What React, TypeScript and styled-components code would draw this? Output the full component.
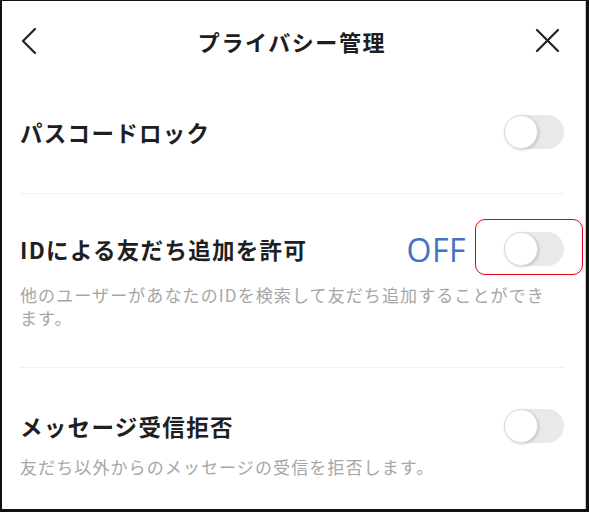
import styled, { createGlobalStyle } from 'styled-components'

const GlobalStyle = createGlobalStyle`
  html, body {
    margin: 0;
    padding: 0;
    background: #ffffff;
  }
  body {
    font-family: "Noto Sans CJK JP", "Noto Sans", sans-serif;
  }
`

const Frame = styled.div`
  box-sizing: border-box;
  width: 589px;
  height: 512px;
  border-style: solid;
  border-color: #111;
  border-width: 1px 3px 3px 2px;
  background: #fff;
  overflow: hidden;
`

const Screen = styled.div`
  box-sizing: border-box;
  height: 100%;
  border-right: 1px solid #c8c8c8;
  padding: 0 21px 0 18px;
  display: flex;
  flex-direction: column;
`

const Header = styled.header`
  height: 79px;
  display: flex;
  align-items: center;
  justify-content: space-between;
`

const IconButton = styled.button<{ $align: 'start' | 'end' }>`
  border: none;
  background: none;
  padding: 0;
  width: 34px;
  height: 28px;
  display: flex;
  align-items: center;
  justify-content: ${p => (p.$align === 'start' ? 'flex-start' : 'center')};
  color: #222;
`

const Title = styled.h1`
  margin: 0;
  font-size: 22px;
  font-weight: 700;
  color: #1e1e1e;
  letter-spacing: 1.6px;
`

const Section = styled.section<{ $top: number; $bottom: number; $divider?: boolean }>`
  padding: ${p => p.$top}px 0 ${p => p.$bottom}px;
  border-bottom: ${p => (p.$divider ? '1px solid #f1f1f1' : 'none')};
`

const Row = styled.div`
  height: 40px;
  display: flex;
  align-items: center;
`

const Label = styled.span`
  flex: 1;
  font-size: 22.5px;
  font-weight: 700;
  color: #1f1f1f;
  letter-spacing: 1.3px;
`

const Desc = styled.p<{ $gap: number }>`
  margin: ${p => p.$gap}px 0 0;
  font-size: 17px;
  line-height: 23px;
  color: #a6a6a6;
  letter-spacing: 1.1px;
  padding-right: 10px;
`

const Note = styled.span`
  font-family: "Open Sans", "Liberation Sans", sans-serif;
  font-size: 32px;
  color: #4472c4;
  margin-right: 38px;
  letter-spacing: 0.5px;
`

const ToggleWrap = styled.div`
  position: relative;
  display: flex;
`

const Highlight = styled.div`
  position: absolute;
  left: -29px;
  right: -19px;
  top: -13px;
  bottom: -9px;
  border: 1.5px solid #e60012;
  border-radius: 10px;
`

const Track = styled.div`
  position: relative;
  width: 60px;
  height: 34px;
  border-radius: 17px;
  background: #e9e9e9;
`

const Knob = styled.div`
  position: absolute;
  left: 0;
  top: 0;
  width: 34px;
  height: 34px;
  border-radius: 50%;
  background: #fff;
  box-sizing: border-box;
  border: 1px solid #dcdcdc;
  box-shadow: 1px 1px 3px rgba(0, 0, 0, 0.18);
`

const Toggle = () => (
  <Track>
    <Knob />
  </Track>
)

export default function App() {
  return (
    <>
      <GlobalStyle />
      <Frame>
        <Screen>
          <Header>
            <IconButton $align="start" aria-label="back">
              <svg width="18" height="28" viewBox="0 0 18 28" fill="none">
                <path d="M15 2 L3 14 L15 26" stroke="#222" strokeWidth="2.2" strokeLinecap="round" strokeLinejoin="round" />
              </svg>
            </IconButton>
            <Title>プライバシー管理</Title>
            <IconButton $align="end" aria-label="close">
              <svg width="25" height="25" viewBox="0 0 25 25" fill="none">
                <path d="M2 2 L23 23 M23 2 L2 23" stroke="#222" strokeWidth="2.2" strokeLinecap="round" />
              </svg>
            </IconButton>
          </Header>

          <Section $top={32} $bottom={41} $divider>
            <Row>
              <Label>パスコードロック</Label>
              <Toggle />
            </Row>
          </Section>

          <Section $top={35} $bottom={38} $divider>
            <Row>
              <Label>IDによる友だち追加を許可</Label>
              <Note>OFF</Note>
              <ToggleWrap>
                <Highlight />
                <Toggle />
              </ToggleWrap>
            </Row>
            <Desc $gap={14}>他のユーザーがあなたのIDを検索して友だち追加することができます。</Desc>
          </Section>

          <Section $top={38} $bottom={0}>
            <Row>
              <Label>メッセージ受信拒否</Label>
              <Toggle />
            </Row>
            <Desc $gap={9}>友だち以外からのメッセージの受信を拒否します。</Desc>
          </Section>
        </Screen>
      </Frame>
    </>
  )
}
